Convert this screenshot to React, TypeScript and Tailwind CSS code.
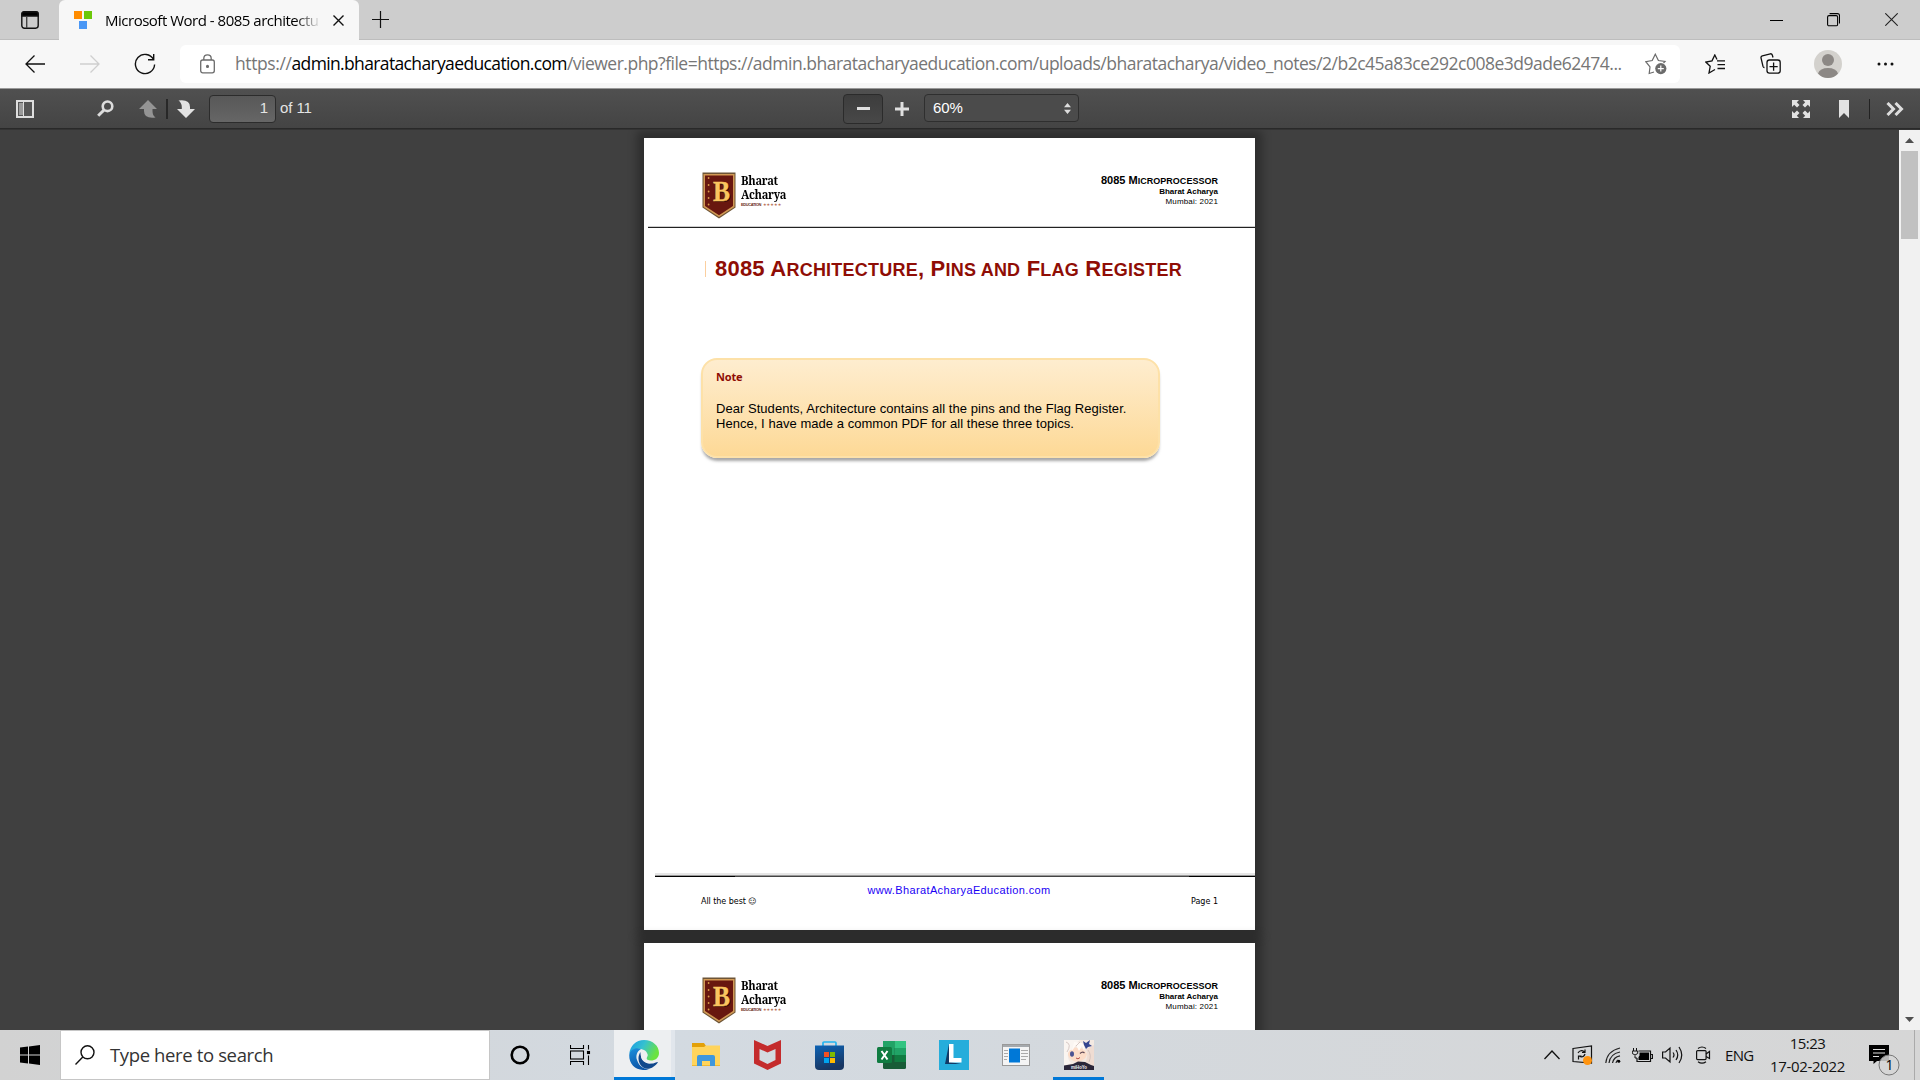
import React from "react";

const segoe = "font-['Open_Sans','Noto_Sans',sans-serif]";

function Logo() {
  return (
    <div className="flex">
      <svg className="mt-[34px] ml-[58px] block" width="34" height="47" viewBox="0 0 34 47">
        <path d="M0.5 0.5H33.5V35.5L17 46.5L0.5 35.5Z" fill="#6d5436" />
        <path d="M1.5 2H32.5V35L17 45L1.5 35Z" fill="#d29a55" />
        <path d="M3 3.5H31V34L17 43.2L3 34Z" fill="#68170f" />
        {[6, 13, 19.5, 26, 32.5].map((y) => (
          <circle key={y} cx="6.6" cy={y} r="0.9" fill="#d89a4a" />
        ))}
        <text x="12" y="29.5" fontFamily="Liberation Serif" fontWeight="700" fontSize="29" fill="#2c0905" textLength="17" lengthAdjust="spacingAndGlyphs">B</text>
        <text x="11" y="28.5" fontFamily="Liberation Serif" fontWeight="700" fontSize="29" fill="#fac55f" stroke="#fac55f" strokeWidth="0.4" textLength="17" lengthAdjust="spacingAndGlyphs">B</text>
      </svg>
      <div className="mt-[36px] ml-[5px] w-[60px] font-['Noto_Serif','Liberation_Serif',serif] text-[12px] leading-[14px] font-bold text-black">
        <div className="origin-left scale-x-[0.93] tracking-[-0.3px]">Bharat</div>
        <div className="origin-left scale-x-[0.93] tracking-[-0.3px]">Acharya</div>
        <div className="flex h-[6px] items-center font-['Liberation_Sans',sans-serif] text-[4px] leading-[4px] tracking-[-0.4px] text-[#6b2a20]">
          EDUCATION<span className="ml-[2px] font-['DejaVu_Sans',sans-serif] text-[4px] tracking-[0.1px] text-[#b56a4c]">★★★★★</span>
        </div>
      </div>
    </div>
  );
}

function PageHeader() {
  return (
    <div className="flex h-[88px] justify-between">
      <Logo />
      <div className="mt-[35px] mr-[37px] text-right font-['Liberation_Sans',sans-serif] text-black">
        <div className="h-[13px] text-[11px] leading-[14px] font-bold tracking-[0.02px] whitespace-nowrap">
          8085 M<span className="text-[9px]">ICROPROCESSOR</span>
        </div>
        <div className="h-[10px] text-[8px] leading-[11px] font-bold">Bharat Acharya</div>
        <div className="h-[10px] text-[8px] leading-[11px] tracking-[0.15px]">Mumbai: 2021</div>
      </div>
    </div>
  );
}

function TabBar() {
  return (
    <div className="flex h-10 bg-[#cdcdcd]">
      <div className="flex w-[59px] items-center justify-center border-b border-[#bdbdbd]">
        <svg width="18" height="18" viewBox="0 0 18 18" fill="none" stroke="#111" strokeWidth="1.4">
          <rect x="0.8" y="0.8" width="16.4" height="16.4" rx="2.6" />
          <path d="M1 2.5Q1 1 2.5 1H15.5Q17 1 17 2.5V5H1Z" fill="#000" />
          <path d="M5.7 5V17" stroke="#444" />
        </svg>
      </div>
      <div className="flex w-[300px] items-center rounded-t-md bg-[#f7f7f7] pl-[15px]">
        <svg width="18" height="18" viewBox="0 0 18 18">
          <rect width="8" height="8" fill="#ff8c00" />
          <rect x="10" width="8" height="8" fill="#6cc80a" />
          <rect x="5" y="10" width="8" height="8" fill="#4a97f5" />
        </svg>
        <div className="ml-[13px] w-[216px] text-[15px] tracking-[-0.49px] whitespace-nowrap text-black [mask-image:linear-gradient(to_right,black_88%,transparent_100%)]">
          Microsoft Word - 8085 architectu
        </div>
        <svg className="ml-[12px]" width="11" height="11" viewBox="0 0 11 11" stroke="#111" strokeWidth="1.4">
          <path d="M0.5 0.5L10.5 10.5M10.5 0.5L0.5 10.5" />
        </svg>
      </div>
      <div className="flex flex-1 items-center border-b border-[#bdbdbd] pl-[13px]">
        <svg width="17" height="17" viewBox="0 0 17 17" stroke="#111" strokeWidth="1.2">
          <path d="M8.5 0V17M0 8.5H17" />
        </svg>
        <div className="flex-1" />
        <svg className="mr-[44px]" width="13" height="14" viewBox="0 0 13 14" stroke="#000" strokeWidth="1"><path d="M0 7.5H13" /></svg>
        <svg className="mr-[45px]" width="13" height="14" viewBox="0 0 13 14" fill="none" stroke="#000" strokeWidth="1.1">
          <rect x="0.6" y="2.6" width="10" height="10.2" rx="1.4" />
          <path d="M2.6 0.6H10.5Q12.5 0.6 12.5 2.6V10.5" />
        </svg>
        <svg className="mr-[22px]" width="13" height="13" viewBox="0 0 13 13" stroke="#222" strokeWidth="1.1"><path d="M0.3 0.3L12.7 12.7M12.7 0.3L0.3 12.7" /></svg>
      </div>
    </div>
  );
}

function AddressBar() {
  return (
    <div className="flex h-12 items-center bg-[#f7f7f7] pb-px pl-[25px]">
      <svg width="20" height="18" viewBox="0 0 20 18" fill="none" stroke="#111" strokeWidth="1.3"><path d="M9.5 0.5L1 9L9.5 17.5M1 9H20" /></svg>
      <svg className="ml-[35px]" width="20" height="18" viewBox="0 0 20 18" fill="none" stroke="#cfcfcf" strokeWidth="1.3"><path d="M10.5 0.5L19 9L10.5 17.5M0 9H19" /></svg>
      <svg className="ml-[34px]" width="22" height="22" viewBox="0 0 22 22" fill="none" stroke="#111" strokeWidth="1.4"><path d="M19.5 6.5A9.6 9.6 0 1 0 20.6 11.5M19.7 1V6.8H14" /></svg>
      <div className="ml-[24px] flex h-[38px] w-[1500px] items-center rounded-md bg-white">
        <svg className="ml-5" width="15" height="20" viewBox="0 0 15 20" fill="none" stroke="#6b6b6b" strokeWidth="1.3">
          <rect x="0.7" y="6" width="13.6" height="12.8" rx="2" />
          <path d="M3.8 6V4.5Q3.8 0.8 7.5 0.8T11.2 4.5V6" />
          <circle cx="7.5" cy="12.4" r="0.9" fill="#6b6b6b" />
        </svg>
        <div className="ml-[20px] w-[1400px] text-[17.5px] tracking-[-0.5px] whitespace-nowrap text-[#767676]">
          <span className="tracking-[-0.4px]">https://</span><span className="tracking-[-0.64px] text-black">admin.bharatacharyaeducation.com</span>
          /viewer.php?file=https://admin.bharatacharyaeducation.com/uploads/bharatacharya/video_notes/2/b2c45a83ce292c008e3d9ade62474...
        </div>
        <svg className="ml-[10px] block" width="22" height="22" viewBox="0 0 22 22" fill="none" stroke="#6b6b6b" strokeWidth="1.2">
          <path d="M9 19L4.2 20.5L5 14L0.8 8.7L7.2 7.5L10.3 1.2L13.4 7.5L20 8.5L18.5 10" />
          <circle cx="15.8" cy="15.6" r="5.6" fill="#6b6b6b" stroke="none" />
          <path d="M15.8 12.6V18.6M12.8 15.6H18.8" stroke="#fff" />
        </svg>
      </div>
      <svg className="ml-[25px]" width="21" height="20" viewBox="0 0 21 20" fill="none" stroke="#111" strokeWidth="1.3">
        <path d="M10 15.5L4 19L5.2 12.3L0.8 8L7 6.8L9.8 1L12 5.5M12 6.8H20M12.5 10.6H20M12.5 14.5H20" />
      </svg>
      <svg className="ml-[34px]" width="21" height="21" viewBox="0 0 21 21" fill="none" stroke="#111" strokeWidth="1.3">
        <rect x="7" y="7" width="13.2" height="13.2" rx="2.4" />
        <path d="M13.6 9.5V17.7M9.5 13.6H17.7M4.5 14.5Q3.4 14.6 3 13.4L1 4.8Q0.8 3.2 2.3 2.8L10.3 0.8Q11.8 0.6 12.3 2L13 4.5" />
      </svg>
      <svg className="ml-[33px]" width="28" height="28" viewBox="0 0 28 28">
        <circle cx="14" cy="14" r="14" fill="#d3d1cd" />
        <circle cx="14" cy="10" r="6" fill="#8c8885" />
        <path d="M4 23.5Q6 18 14 18T24 23.5Q20 28 14 28T4 23.5" fill="#8c8885" />
      </svg>
      <svg className="ml-[35px]" width="17" height="4" viewBox="0 0 17 4" fill="#111"><circle cx="2" cy="2" r="1.5" /><circle cx="8.5" cy="2" r="1.5" /><circle cx="15" cy="2" r="1.5" /></svg>
    </div>
  );
}

function PdfToolbar() {
  return (
    <div className="relative z-10 flex h-[41px] items-center border-t border-b border-t-[#999] border-b-[#292929] bg-linear-to-b from-[#505050] to-[#444444] font-['Liberation_Sans',sans-serif] text-[15px] text-[#e4e4e4]">
      <svg className="ml-4" width="18" height="18" viewBox="0 0 18 18">
        <rect x="1" y="1" width="16" height="16" fill="#555" stroke="#dedede" strokeWidth="2" />
        <rect x="3" y="3" width="4" height="12" fill="#999" />
        <path d="M7.5 2V16" stroke="#dedede" />
      </svg>
      <svg className="ml-[63px]" width="17" height="17" viewBox="0 0 17 17" fill="none" stroke="#dcdcdc">
        <circle cx="10.5" cy="6.3" r="4.8" strokeWidth="2.6" />
        <path d="M7 10L1.2 15.8" strokeWidth="3" />
      </svg>
      <svg className="ml-[25px]" width="18" height="18" viewBox="0 0 18 18" fill="#949494"><path d="M9 0L18 9H13.5V11Q13.5 15.5 16.5 17.5Q5 19 5 11V9H0Z" /></svg>
      <div className="mr-[10px] ml-[9px] h-5 w-[2px] bg-[#282828]" />
      <svg width="18" height="18" viewBox="0 0 18 18" fill="#e2e2e2" className="-ml-px"><path d="M9 18L0 9H4.8V7Q4.8 3 1.5 0.5Q13 -1 13 7V9H18Z" /></svg>
      <div className="ml-[14px] flex h-7 w-[67px] items-center justify-end rounded-sm border border-[#2c2c2c] bg-linear-to-b from-[#585858] to-[#666] pr-[7px]">1</div>
      <div className="ml-[4px] w-[563px] tracking-[-0.1px]">of 11</div>
      <div className="flex h-[30px] w-[40px] items-center justify-center rounded-sm border border-[#2b2b2b] bg-linear-to-b from-[#3d3d3d] to-[#484848]"><div className="h-[3px] w-[13px] bg-[#e0e0e0]" /></div>
      <svg className="ml-3" width="14" height="14" viewBox="0 0 14 14" stroke="#e0e0e0" strokeWidth="3"><path d="M7 0V14M0 7H14" /></svg>
      <div className="-mt-[2px] ml-[15px] flex h-7 w-[155px] items-center justify-between rounded-sm border border-[#2f2f2f] bg-[#4b4b4b] pt-px pr-[7px] pl-2 text-[15px] tracking-[-0.1px] text-white">
        60%
        <svg width="7" height="11" viewBox="0 0 7 11" fill="#ddd"><path d="M3.5 0L7 4.3H0ZM0 6.7H7L3.5 11Z" /></svg>
      </div>
      <div className="flex-1" />
      <svg width="18" height="18" viewBox="0 0 18 18" fill="#e2e2e2">
        <path d="M0 0H7L4.8 2.2L7.5 5L5 7.5L2.2 4.8L0 7ZM18 0V7L15.8 4.8L13 7.5L10.5 5L13.2 2.2L11 0ZM0 18V11L2.2 13.2L5 10.5L7.5 13L4.8 15.8L7 18ZM18 18H11L13.2 15.8L10.5 13L13 10.5L15.8 13.2L18 11Z" />
      </svg>
      <svg className="ml-[29px]" width="10" height="18" viewBox="0 0 10 18" fill="#e2e2e2"><path d="M0 0H10V18L5 13L0 18Z" /></svg>
      <div className="ml-5 h-5 w-px bg-[#222]" />
      <svg className="mr-4 ml-4" width="18" height="14" viewBox="0 0 18 14" fill="none" stroke="#ddd" strokeWidth="3"><path d="M1.5 1L7.5 7L1.5 13M9.5 1L15.5 7L9.5 13" /></svg>
    </div>
  );
}

function Viewer() {
  return (
    <div className="flex h-[900px] bg-[#404040]">
      <div className="flex w-[1899px] flex-col items-center overflow-hidden">
        <div className="h-[900px] w-[611px]">
          <div className="mt-2 h-[792px] w-[611px] bg-white shadow-[0_0_9px_7px_rgba(0,0,0,0.3)]">
            <PageHeader />
            <div className="ml-1 h-[2px] border-t border-b border-t-[#cfcfcf] border-b-[#222]" />
            <div className="mt-[25px] flex h-[32px] items-center">
              <div className="ml-[61px] h-4 w-px bg-[#fbcf9f]" />
              <h1 className="ml-[9px] font-['Liberation_Sans',sans-serif] text-[22px] leading-8 font-bold tracking-[0.22px] whitespace-nowrap text-[#8f0d05]">
                8085 A<span className="text-[18px]">RCHITECTURE</span>, P<span className="text-[18px]">INS AND</span> F<span className="text-[18px]">LAG</span> R<span className="text-[18px]">EGISTER</span>
              </h1>
            </div>
            <div className="mt-[73px] ml-[57px] h-[100px] w-[459px] rounded-[16px] border-2 border-[#fde1a8] bg-linear-to-b from-[#feedcf] to-[#fdd996] px-[13px] pt-[8px] font-['Liberation_Sans',sans-serif] shadow-[0_4px_3px_-1px_rgba(130,130,130,0.7)]">
              <div className="font-['Noto_Sans',sans-serif] text-[11px] leading-[18px] font-bold tracking-[-0.2px] text-[#8f0d05]">Note</div>
              <p className="mt-[15px] text-[13px] leading-[15px] tracking-[0.04px] whitespace-nowrap text-black">
                Dear Students, Architecture contains all the pins and the Flag Register.
                <br />
                Hence, I have made a common PDF for all these three topics.
              </p>
            </div>
            <div className="mt-[415px] ml-[11px] h-[4px] border-t-2 border-[#e6e6e6] bg-[#999]">
              <div className="mt-px flex h-px bg-[#444]"><div className="w-[80px] bg-black" /><div className="flex-1" /><div className="w-[66px] bg-black" /></div>
            </div>
            <div className="mt-[6px] h-[14px] pl-[19px] text-center font-['Liberation_Sans',sans-serif] text-[11px] leading-[14px] tracking-[0.38px] text-[#1a00f5]">www.BharatAcharyaEducation.com</div>
            <div className="-mt-px flex justify-between pr-[37px] pl-[57px] font-['DejaVu_Sans',sans-serif] text-[8px] leading-[12px] text-black"><span className="tracking-[-0.05px]">All the best ☺</span><span>Page 1</span></div>
          </div>
          <div className="mt-[13px] h-[792px] w-[611px] bg-white shadow-[0_0_9px_7px_rgba(0,0,0,0.3)]"><PageHeader /></div>
        </div>
      </div>
      <div className="flex w-[21px] flex-col items-center bg-[#f1f1f1]">
        <svg className="mt-[8px]" width="9" height="5" viewBox="0 0 9 5" fill="#505050"><path d="M4.5 0L9 5H0Z" /></svg>
        <div className="mt-[8px] h-[88px] w-[17px] bg-[#c1c1c1]" />
        <div className="flex-1" />
        <svg className="mb-[8px]" width="9" height="5" viewBox="0 0 9 5" fill="#505050"><path d="M0 0H9L4.5 5Z" /></svg>
      </div>
    </div>
  );
}

function Taskbar() {
  return (
    <div className="flex h-[50px] items-center bg-linear-to-r from-[#d2d2d2] via-[#d3dae1] via-35% to-[#d6d6d6]">
      <svg className="ml-5" width="20" height="20" viewBox="0 0 20 20"><path d="M0 2.6L8 1.5V9.5H0ZM9 1.4L20 0V9.5H9ZM0 10.5H8V18.5L0 17.5ZM9 10.5H20V20L9 18.6Z" /></svg>
      <div className="ml-5 flex h-[50px] w-[430px] items-center border border-[#c6c6c6] bg-white text-[18.5px] tracking-[-0.37px] text-[#333]">
        <svg className="ml-[14px]" width="20" height="20" viewBox="0 0 20 20" fill="none" stroke="#111" strokeWidth="1.4"><circle cx="12.5" cy="7.3" r="6.5" /><path d="M7.8 12L0.5 19.5" /></svg>
        <span className="ml-[15px]">Type here to search</span>
      </div>
      <svg className="ml-5" width="20" height="20" viewBox="0 0 20 20" fill="none" stroke="#000" strokeWidth="2.6"><circle cx="10" cy="10" r="8.3" /></svg>
      <svg className="ml-10" width="21" height="20" viewBox="0 0 21 20" fill="none" stroke="#000" strokeWidth="1.1"><path d="M0.5 0V3.5H13.5V0M0.5 20V16.5H13.5V20M18.5 0V4.5M18.5 10.5V20" /><rect x="0.5" y="6" width="13" height="8" /><rect x="17.5" y="6.5" width="2" height="2" fill="#000" /></svg>
      <div className="ml-[23px] flex h-[50px] w-[61px] flex-col border-r-4 border-[#e1e6ec] bg-[#edeff1]">
        <svg className="mt-[10px] ml-[15px]" width="30" height="30" viewBox="0 0 30 30">
          <defs>
            <linearGradient id="eg" x1="0" x2="1" y1="0" y2="0.4"><stop offset="0.1" stopColor="#1fa0e0" /><stop offset="0.5" stopColor="#35c1d0" /><stop offset="1" stopColor="#6be33f" /></linearGradient>
            <linearGradient id="eb" x1="0" x2="0.3" y1="0" y2="1"><stop offset="0" stopColor="#1c8fdc" /><stop offset="1" stopColor="#0d56a8" /></linearGradient>
          </defs>
          <path d="M0.3 14C1 6 7 0 15 0C24 0 30 6 30 13C30 18 26 20.5 22 20.5C19 20.5 17 19.5 17.5 18C19 16 19 12 15 10C9 7.5 3 9 0.3 14Z" fill="url(#eg)" />
          <path d="M0.2 15C1 9.5 7 7 12 9C8 11 6.5 16 8 20C10 26 14 29 20 29C18 30 16 30 14 30C6 29.5 0 24 0.2 15Z" fill="url(#eb)" />
          <path d="M11.5 12C8 17 9 25 15 28C20 30.5 26 27 29 22C28 21.5 25 24 21 23.5C15 23 11 18 11.5 12Z" fill="#11488c" />
          <path d="M12 16Q12.5 11.8 16 12Q19 13 18.5 16Q16.5 18 17.8 19.5Q20 22.5 26 21.5Q21 25 16.5 22.5Q12 20 12 16Z" fill="#edeff1" />
        </svg>
        <div className="mt-[7px] h-[3px] w-[61px] bg-[#0078d7]" />
      </div>
      <svg className="ml-[17px]" width="28" height="24" viewBox="0 0 28 24"><path d="M0 0H12L14 3H28V23H0Z" fill="#e3a008" /><path d="M0 4H12L14 2.5H28V22.5H0Z" fill="#ffd45c" /><path d="M5 23V14Q5 12 7 12H21Q23 12 23 14V23H18V18H10V23Z" fill="#3f97dc" /></svg>
      <svg className="ml-[34px]" width="27" height="30" viewBox="0 0 27 30"><path d="M0 0L13.5 6L27 0V23.5L13.5 30L0 23.5ZM5.5 9V20L13.5 24L21.5 20V9L13.5 12.5Z" fill="#c42b2c" fillRule="evenodd" /></svg>
      <svg className="ml-[34px]" width="29" height="30" viewBox="0 0 29 30"><defs><linearGradient id="st" x1="0" x2="0.3" y1="0" y2="1"><stop stopColor="#0d63b5" /><stop offset="1" stopColor="#183662" /></linearGradient></defs><path d="M8 6V3Q8 2 9 2H20Q21 2 21 3V6" fill="none" stroke="#22b4f0" strokeWidth="1.7" /><path d="M0 5.5H29V26Q29 30 25 30H4Q0 30 0 26Z" fill="url(#st)" /><path d="M9 12H14V17H9Z" fill="#f25022" /><path d="M15 12H20V17H15Z" fill="#7fba00" /><path d="M9 18H14V23H9Z" fill="#00a4ef" /><path d="M15 18H20V23H15Z" fill="#ffb900" /></svg>
      <svg className="ml-[33px]" width="29" height="28" viewBox="0 0 29 28"><rect x="6" width="23" height="28" rx="1.5" fill="#185c37" /><path d="M6 0H17.5V14H6Z" fill="#21a366" /><path d="M17.5 0H29V7H17.5Z" fill="#33c481" /><path d="M17.5 7H29V14H17.5Z" fill="#21a366" /><path d="M6 14H17.5V21H6Z" fill="#185c37" /><path d="M17.5 14H29V21H17.5Z" fill="#107c41" /><rect y="6" width="15" height="16" rx="1.5" fill="#107c41" /><path d="M4.5 10L10.5 18.5M10.5 10L4.5 18.5" stroke="#fff" strokeWidth="2" /></svg>
      <svg className="ml-[33px]" width="30" height="30" viewBox="0 0 30 30"><rect width="30" height="30" fill="#25addb" /><path d="M10 4L6 24H22L11 22Z" fill="#123a66" /><path d="M10 4H14.5V18H22.5V22.5H10Z" fill="#fff" /></svg>
      <svg className="ml-[33px]" width="28" height="22" viewBox="0 0 28 22"><rect x="0.5" y="0.5" width="27" height="21" fill="#f4f4f4" stroke="#999" /><path d="M1 1H27V3H1Z" fill="#a5a9ad" /><path d="M2 6.5H6M2 9.5H6M2 12.5H6M2 15.5H5M19 6.5H26M19 9.5H26M19 12.5H26M19 15.5H24" stroke="#aaa" /><rect x="7" y="4.5" width="11" height="14" fill="#0078d7" /></svg>
      <div className="ml-[23px] flex h-[50px] w-[51px] flex-col items-center">
        <svg className="mt-[10px]" width="30" height="30" viewBox="0 0 30 30">
          <rect width="30" height="30" fill="#f3e9e2" />
          <path d="M4 9Q10 6 20 9L23 14Q22 20 14 22Q6 21 4 15Z" fill="#fcdcc8" />
          <path d="M0 0H16Q10 4 8.5 10Q6 9 4 13Q3 19 7 23L0 26Z" fill="#faf5f1" />
          <path d="M8 11L12 5L15 11L18 6L20 11Q22 6 18 3L10 2Z" fill="#fffaf6" />
          <path d="M22 9Q25 16 21 23L30 26V5Z" fill="#efdcd2" />
          <path d="M2 2Q8 4 3 12M24 10Q28 15 25 22M16 2Q14 4 12 6" fill="none" stroke="#cdbcb9" strokeWidth="0.8" />
          <path d="M19 1L22 3L26 0L25 4L28 6L24 7L22 9L20 5Z" fill="#34458f" />
          <ellipse cx="8" cy="14" rx="2" ry="2.8" fill="#4b5392" />
          <path d="M16 13.5Q18.5 11 20.5 13" fill="none" stroke="#624a55" strokeWidth="1.2" />
          <path d="M12 18Q14 20 16 17.5" fill="none" stroke="#b5504a" />
          <path d="M0 25.5L9 24L14 21.5L21 22L27 25L30 26V30H0Z" fill="#2a2639" />
          <text x="7" y="29" fontFamily="Liberation Sans" fontWeight="700" fontSize="5.5" fill="#f2f2f6" textLength="16" lengthAdjust="spacingAndGlyphs">miHoYo</text>
        </svg>
        <div className="mt-[7px] h-[3px] w-[51px] bg-[#0078d7]" />
      </div>
      <div className="flex-1" />
      <div className="flex items-center text-[15px] text-[#111]">
        <svg width="16" height="10" viewBox="0 0 16 10" fill="none" stroke="#111" strokeWidth="1.3"><path d="M0.5 9L8 1L15.5 9" /></svg>
        <svg className="ml-3" width="21" height="20" viewBox="0 0 21 20" fill="none" stroke="#111" strokeWidth="1.2"><path d="M1 3.5L19.5 1V18L1 16.5Z" /><path d="M6 8Q8.5 4 12.5 7M13 4.5V7.5H10M13 9Q11.5 13 7.5 11.5M6.5 14.5V11H9.5" /><circle cx="15.5" cy="15.5" r="4.5" fill="#ff9410" stroke="none" /></svg>
        <svg className="ml-3" width="16" height="16" viewBox="0 0 16 16" fill="none" stroke="#222" strokeWidth="1.2"><path d="M0.8 16Q2 4 15 1M4 16Q5 7 15 5M7.5 16Q8.5 10 15 8.8M11 16Q11.5 13.5 13 13" /><circle cx="13.8" cy="14.2" r="1.5" fill="#000" stroke="none" /></svg>
        <svg className="ml-[11px]" width="21" height="14" viewBox="0 0 21 14" fill="none" stroke="#111" strokeWidth="1.2"><path d="M6.5 3H18.5V13.5H5V10M18.5 6.5H20.5V10.5H18.5" /><path d="M7.5 4.5H17V12H6.5V9Q8 8 7.5 6Z" fill="#000" stroke="none" /><path d="M1.5 0V3M4.5 0V3M0.3 3H5.7V5.5Q3 8.5 0.3 5.5ZM3 7.5V10H5" strokeWidth="1" /></svg>
        <svg className="ml-[9px]" width="21" height="18" viewBox="0 0 21 18" fill="none" stroke="#111" strokeWidth="1.2"><path d="M0.6 6H3.5L8 2V16L3.5 12H0.6ZM11 6.5Q13 9 11 11.5M14 4Q17.5 9 14 14M17 1Q22.5 9 17 17" /></svg>
        <svg className="ml-[13px]" width="15" height="18" viewBox="0 0 15 18" fill="none" stroke="#111" strokeWidth="1.2"><rect x="0.6" y="4.6" width="9.5" height="9" rx="1" /><path d="M10 8L13.5 5.5V12.5L10 10.5M2 2.5Q6 -0.5 10 2.5M2 15.7Q6 18.5 10 15.7" /></svg>
        <span className="ml-[14px] w-[29px] tracking-[-0.7px]">ENG</span>
        <div className="ml-[16px] flex w-[75px] flex-col items-center leading-[23px]"><span className="tracking-[-0.55px]">15:23</span><span className="tracking-[-0.35px]">17-02-2022</span></div>
        <svg className="mt-[9px] mr-[14px] ml-[24px]" width="31" height="32" viewBox="0 0 31 32"><path d="M0 1H20V17H8L4.5 20V17H0Z" /><path d="M4 5.5H16M4 9H16M4 12.5H10" stroke="#ddd" strokeWidth="1.2" /><circle cx="20" cy="21" r="10" fill="#d6d6d6" fillOpacity="0.85" stroke="#777" /><text x="16.5" y="26" fontFamily="Open Sans" fontSize="14">1</text></svg>
        <div className="mr-[5px] h-[50px] w-px bg-[#aaa]" />
      </div>
    </div>
  );
}

export default function App() {
  return (
    <div className={`h-[1080px] w-[1920px] overflow-hidden ${segoe}`}>
      <TabBar />
      <AddressBar />
      <PdfToolbar />
      <div className="h-px bg-[#333]" />
      <Viewer />
      <Taskbar />
    </div>
  );
}
